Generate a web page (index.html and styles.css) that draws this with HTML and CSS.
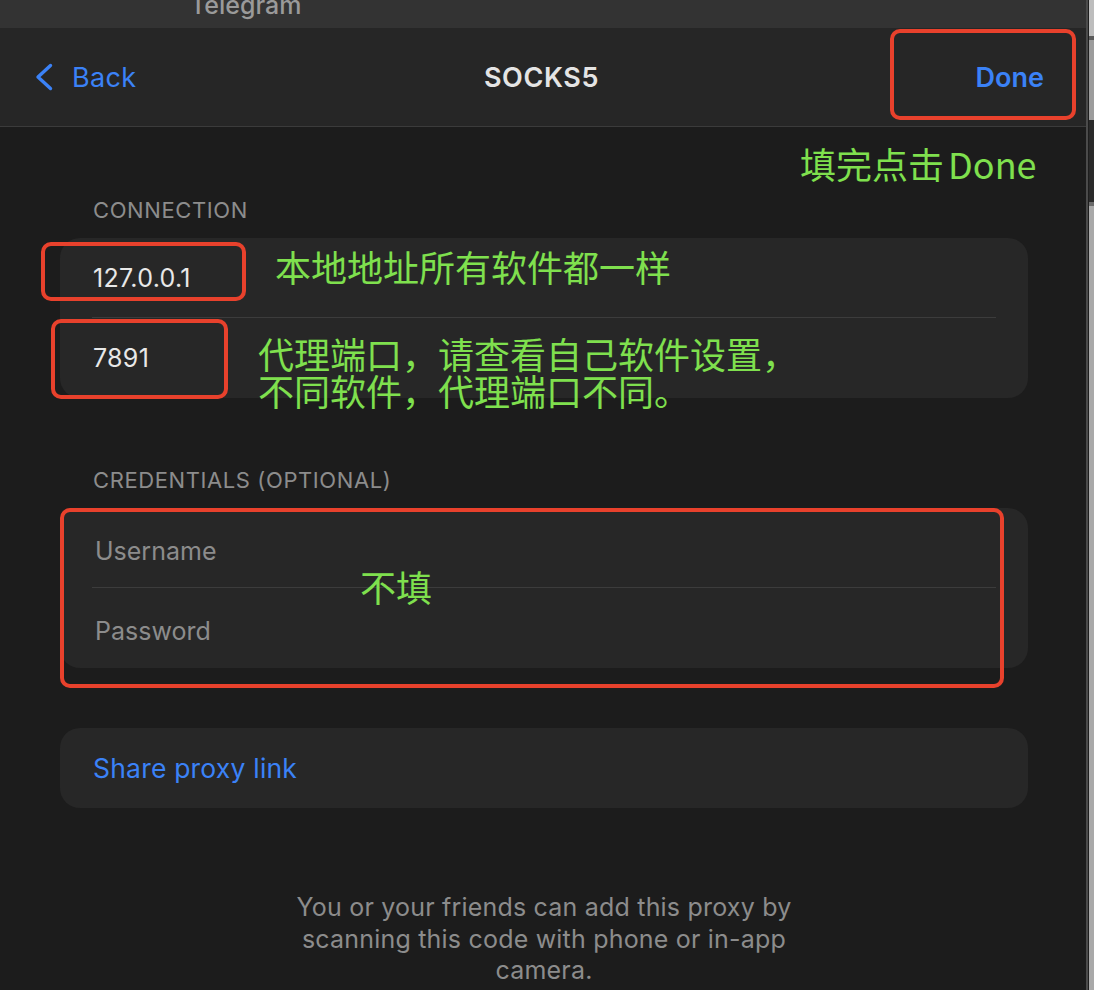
FILE: index.html
```html
<!DOCTYPE html>
<html lang="zh-CN">
<head>
<meta charset="utf-8">
<title>SOCKS5</title>
<link rel="stylesheet" href="styles.css">
</head>
<body>
<div class="window">
  <div class="app">
    <div class="titlebar"><span class="title-text">Telegram</span></div>
    <header class="nav">
      <a class="nav-back">
        <svg class="chevron" width="18" height="28" viewBox="0 0 18 28"><polyline points="15.5,2.5 3,14 15.5,25.5" fill="none" stroke="#3b82f7" stroke-width="3.4" stroke-linecap="round" stroke-linejoin="round"/></svg>
        <span>Back</span>
      </a>
      <div class="nav-title">SOCKS5</div>
      <a class="nav-done">Done</a>
    </header>
    <main class="content">
      <div class="section-label">CONNECTION</div>
      <div class="card">
        <div class="row"><span class="value">127.0.0.1</span></div>
        <div class="sep"></div>
        <div class="row row-last"><span class="value">7891</span></div>
      </div>
      <div class="section-label">CREDENTIALS (OPTIONAL)</div>
      <div class="card">
        <div class="row"><span class="placeholder">Username</span></div>
        <div class="sep"></div>
        <div class="row row-last"><span class="placeholder">Password</span></div>
      </div>
      <div class="card card-share">
        <div class="row row-last"><span class="link">Share proxy link</span></div>
      </div>
      <p class="footer-note">You or your friends can add this proxy by scanning this code with phone or in-app camera.</p>
    </main>

    <div class="mark mark-done"></div>
    <div class="mark mark-host"></div>
    <div class="mark mark-port"></div>
    <div class="mark mark-cred"></div>

    <div class="note note-done">填完点击 Done</div>
    <div class="note note-host">本地地址所有软件都一样</div>
    <div class="note note-port">代理端口，请查看自己软件设置，<br>不同软件，代理端口不同。</div>
    <div class="note note-cred">不填</div>
  </div>
  <div class="side">
    <div class="side-line"></div>
    <div class="side-gap"></div>
    <div class="side-strip"></div>
  </div>
</div>
</body>
</html>
```

FILE: styles.css
```css
html, body {
  margin: 0;
  padding: 0;
  background: #1c1c1c;
  overflow: hidden;
}

body {
  font-family: Inter, "Noto Sans", "Noto Sans CJK SC", sans-serif;
  -webkit-font-smoothing: antialiased;
}

.window {
  display: flex;
  width: 1094px;
  height: 990px;
}

.app {
  position: relative;
  width: 1086px;
  height: 990px;
  background: #1c1c1c;
  display: flex;
  flex-direction: column;
  overflow: hidden;
}

/* title bar */
.titlebar {
  height: 28px;
  background: #333333;
  overflow: hidden;
  padding-left: 190px;
}

.title-text {
  display: block;
  margin-top: -8px;
  font-size: 25px;
  line-height: 26px;
  font-weight: 500;
  color: #9a9a9a;
}

/* navigation bar */
.nav {
  height: 98px;
  background: #262626;
  border-bottom: 1px solid #3b3b3b;
  display: grid;
  grid-template-columns: 1fr auto 1fr;
  align-items: center;
  padding: 0 42px 0 35px;
}

.nav-back {
  display: flex;
  align-items: center;
  gap: 19px;
  color: #3b82f7;
  font-size: 27px;
  font-weight: 400;
  letter-spacing: 0.3px;
  justify-self: start;
}

.chevron {
  display: block;
}

.nav-title {
  color: #e4e4e4;
  font-size: 27px;
  font-weight: 600;
  letter-spacing: 0.6px;
  padding-left: 4px;
}

.nav-done {
  justify-self: end;
  color: #3b82f7;
  font-size: 27px;
  font-weight: 600;
}

/* content */
.content {
  padding: 0 58px 0 60px;
  display: flex;
  flex-direction: column;
}

.section-label {
  margin-top: 69px;
  margin-bottom: 14px;
  padding-left: 33px;
  font-size: 22px;
  line-height: 28px;
  color: #8c8c8c;
  letter-spacing: 0.6px;
}

.card + .section-label {
  margin-top: 68px;
}

.card {
  background: #272727;
  border-radius: 20px;
  display: flex;
  flex-direction: column;
}

.row {
  height: 79px;
  display: flex;
  align-items: center;
  padding-left: 33px;
  font-size: 25px;
}

.row-last {
  height: 80px;
}

.sep {
  height: 1px;
  background: #3c3c3c;
  margin: 0 32px 0 32px;
}

.value {
  color: #e8e8e8;
  letter-spacing: 0.3px;
}

.placeholder {
  color: #8c8c8c;
  padding-left: 2px;
  padding-top: 6px;
}

.card-share {
  margin-top: 60px;
}

.link {
  color: #3b82f7;
  font-size: 26.5px;
  letter-spacing: 0.2px;
}

.footer-note {
  margin: 84px auto 0;
  width: 540px;
  text-align: center;
  font-size: 25px;
  line-height: 31.5px;
  letter-spacing: 0.2px;
  color: #8c8c8c;
}

/* red annotation frames */
.mark {
  position: absolute;
  border: 4px solid #e8412c;
  border-radius: 10px;
  box-sizing: border-box;
}

.mark-done {
  left: 890px;
  top: 29px;
  width: 186px;
  height: 91px;
}

.mark-host {
  left: 41px;
  top: 242px;
  width: 205px;
  height: 59px;
}

.mark-port {
  left: 51px;
  top: 319px;
  width: 177px;
  height: 80px;
}

.mark-cred {
  left: 60px;
  top: 508px;
  width: 944px;
  height: 180px;
}

/* green annotation text */
.note {
  position: absolute;
  font-family: "Noto Sans CJK SC", "Noto Sans", sans-serif;
  font-size: 36px;
  line-height: 36px;
  color: #7fe04e;
  white-space: nowrap;
}

.note-done {
  left: 800px;
  top: 145px;
  word-spacing: -4px;
}

.note-host {
  left: 275px;
  top: 248px;
}

.note-port {
  left: 258px;
  top: 335px;
  line-height: 37px;
}

.note-cred {
  left: 360px;
  top: 568px;
}

/* neighbouring window edge */
.side {
  width: 8px;
  height: 990px;
  display: flex;
}

.side-line {
  width: 2px;
  background: #4b4b4b;
}

.side-gap {
  width: 1px;
  background: #1e1e1e;
}

.side-strip {
  flex: 1;
  background: linear-gradient(to bottom,
    #bdbdbd 0 36px,
    #5a5a5a 36px 40px,
    #9c9c9c 40px 120px,
    #2a2a2a 120px 202px,
    #6a6a6a 202px 206px,
    #a9a9a9 206px);
}
```
